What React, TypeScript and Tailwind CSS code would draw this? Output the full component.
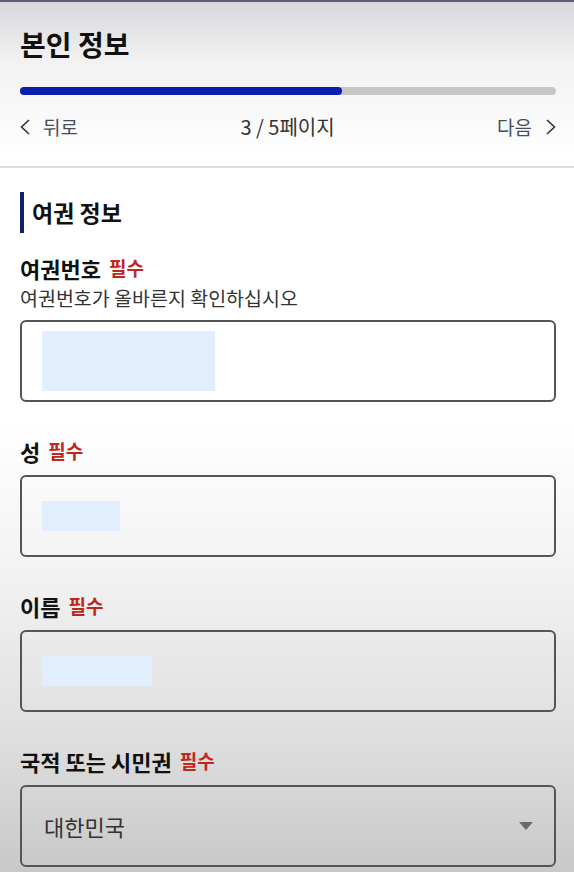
const Required = () => (
  <span className="ml-2 text-[19px] font-bold text-[#c0281e]">필수</span>
);

const Chevron = ({ dir }: { dir: "left" | "right" }) => (
  <svg width="10" height="16" viewBox="0 0 10 16" fill="none" stroke="#333" strokeWidth="1.6">
    <polyline points={dir === "left" ? "9,1 1.5,8 9,15" : "1,1 8.5,8 1,15"} />
  </svg>
);

const Field = ({
  label,
  hint,
  fill,
  fillH,
}: {
  label: string;
  hint?: string;
  fill: string;
  fillH: string;
}) => (
  <div className="flex flex-col">
    <div className="flex h-[30px] items-center text-[22px] font-bold text-[#111]">
      {label}
      <Required />
    </div>
    {hint && <p className="mt-px h-[28px] text-[19.5px] leading-[28px] text-[#333]">{hint}</p>}
    <div className={`${hint ? "mt-[8px]" : "mt-[9px]"} flex h-[82px] items-center rounded-[6px] border-2 border-[#555] px-5`}>
      <div className={`${fill} ${fillH} bg-[#e1eefe]`} />
    </div>
  </div>
);

export default function App() {
  return (
    <div
      className="min-h-[872px] w-full bg-[linear-gradient(to_bottom,#d6d6dc_0%,#f2f2f2_7%,#ffffff_18%,#ffffff_48%,#f3f3f3_65%,#dedede_85%,#c8c8c8_100%)] font-['Noto_Sans_CJK_KR','Noto_Sans',sans-serif] text-[#111]"
    >
      <div className="h-[2px] bg-[#5c5c80]" />

      {/* header */}
      <div className="pl-5 pr-[18px] pt-[22px]">
        <h1 className="text-[28px] font-bold leading-[40px] text-[#111]">본인 정보</h1>
        <div className="mt-[23px] h-[8px] w-full rounded-full bg-[#c6c6c6]">
          <div className="h-full w-[60%] rounded-full bg-[#0a1fb0]" />
        </div>
        <div className="mt-[18px] flex h-[28px] items-center justify-between text-[19px]">
          <div className="flex items-center gap-[13px] text-[#454c60]">
            <Chevron dir="left" />
            <span>뒤로</span>
          </div>
          <span className="text-[20px] text-[#333]">3 / 5페이지</span>
          <div className="flex items-center gap-[14px] text-[#454c60]">
            <span>다음</span>
            <Chevron dir="right" />
          </div>
        </div>
      </div>
      <div className="mt-[25px] h-[2px] bg-[#dcdcdc]" />

      {/* form */}
      <div className="flex flex-col pl-5 pr-[18px] pt-[24px]">
        <div className="flex h-[41px] items-center border-l-[4px] border-[#14206e] pl-[8px] text-[23px] font-bold">
          여권 정보
        </div>
        <div className="mt-[20px] flex flex-col gap-[34px]">
          <Field label="여권번호" hint="여권번호가 올바른지 확인하십시오" fill="w-[173px]" fillH="h-[60px]" />
          <Field label="성" fill="w-[78px]" fillH="h-[30px]" />
          <Field label="이름" fill="w-[110px]" fillH="h-[30px]" />
          <div className="flex flex-col">
            <div className="flex h-[30px] items-center text-[22px] font-bold">
              국적 또는 시민권
              <Required />
            </div>
            <div className="mt-[9px] flex h-[82px] items-center justify-between rounded-[6px] border-2 border-[#555] pl-[22px] pr-[20px]">
              <span className="text-[22px] text-[#333]">대한민국</span>
              <svg width="16" height="10" viewBox="0 0 16 10">
                <path d="M1 1h14L8 9z" fill="#6a6a6a" />
              </svg>
            </div>
          </div>
        </div>
      </div>
    </div>
  );
}
